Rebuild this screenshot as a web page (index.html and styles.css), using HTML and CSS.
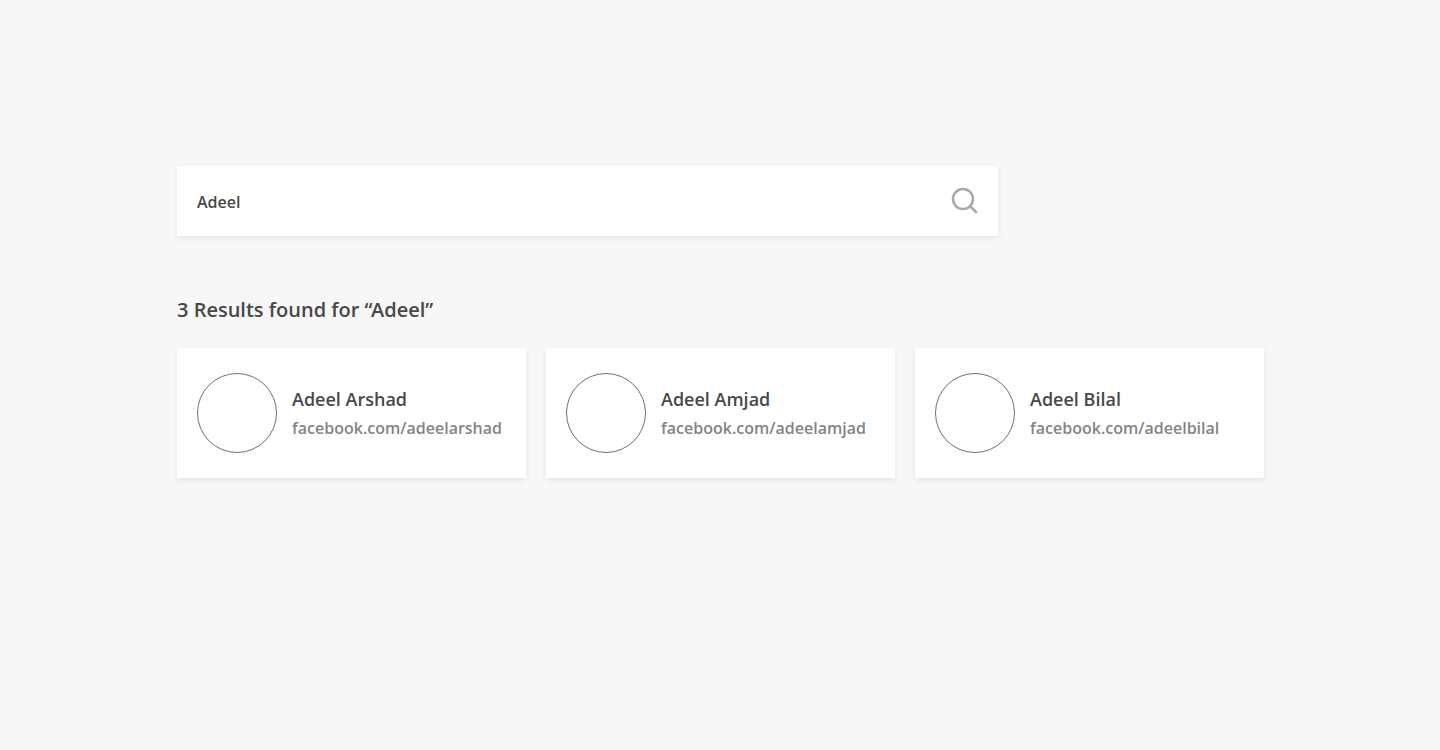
FILE: index.html
```html
<!DOCTYPE html>
<html lang="en">
<head>
<meta charset="utf-8">
<title>Search</title>
<link rel="stylesheet" href="styles.css">
</head>
<body>
<main class="page">
  <form class="search">
    <span class="search-text">Adeel</span>
    <svg class="search-icon" width="28" height="28" viewBox="0 0 28 28" fill="none"><circle cx="13" cy="13" r="10"/><path d="M20 20l6 6"/></svg>
  </form>
  <h1 class="heading">3 Results found for <span class="quote">“</span>Adeel”</h1>
  <section class="results">
    <article class="card"><div class="avatar"></div><div class="info"><h2 class="name">Adeel Arshad</h2><p class="link">facebook.com/adeelarshad</p></div></article>
    <article class="card"><div class="avatar"></div><div class="info"><h2 class="name">Adeel Amjad</h2><p class="link">facebook.com/adeelamjad</p></div></article>
    <article class="card"><div class="avatar"></div><div class="info"><h2 class="name">Adeel Bilal</h2><p class="link">facebook.com/adeelbilal</p></div></article>
  </section>
</main>
</body>
</html>
```
FILE: styles.css
```css
* { box-sizing: border-box; margin: 0; padding: 0; }
body { min-height: 100vh; background: #f7f7f7; font-family: "Open Sans", sans-serif; font-weight: 600; color: #484848; }
.page { width: 1087px; min-height: 100vh; margin-left: 177px; padding-top: 166px; }
.search { display: flex; align-items: center; justify-content: space-between; width: 821px; height: 70px; padding: 0 20px; background: #fff; box-shadow: 0 2px 6px rgba(0,0,0,.08); }
.search-text { font-size: 16px; line-height: 22px; padding-top: 2px; }
.search-icon { margin-bottom: 2px; stroke: #a9a9ad; stroke-width: 2.5; stroke-linecap: round; }
.heading { margin-top: 60px; font-size: 20px; line-height: 28px; font-weight: 600; }
.quote { letter-spacing: -1.5px; }
.results { display: grid; grid-template-columns: repeat(3, 349px); gap: 20px; margin-top: 24px; }
.card { display: flex; align-items: center; gap: 15px; height: 130px; padding: 0 20px; background: #fff; box-shadow: 0 2px 6px rgba(0,0,0,.08); }
.avatar { width: 80px; height: 80px; border: 1px solid #707070; border-radius: 50%; }
.name { font-size: 18px; line-height: 24px; font-weight: 600; }
.link { margin-top: 6px; font-size: 16px; line-height: 22px; color: #848484; }
```
